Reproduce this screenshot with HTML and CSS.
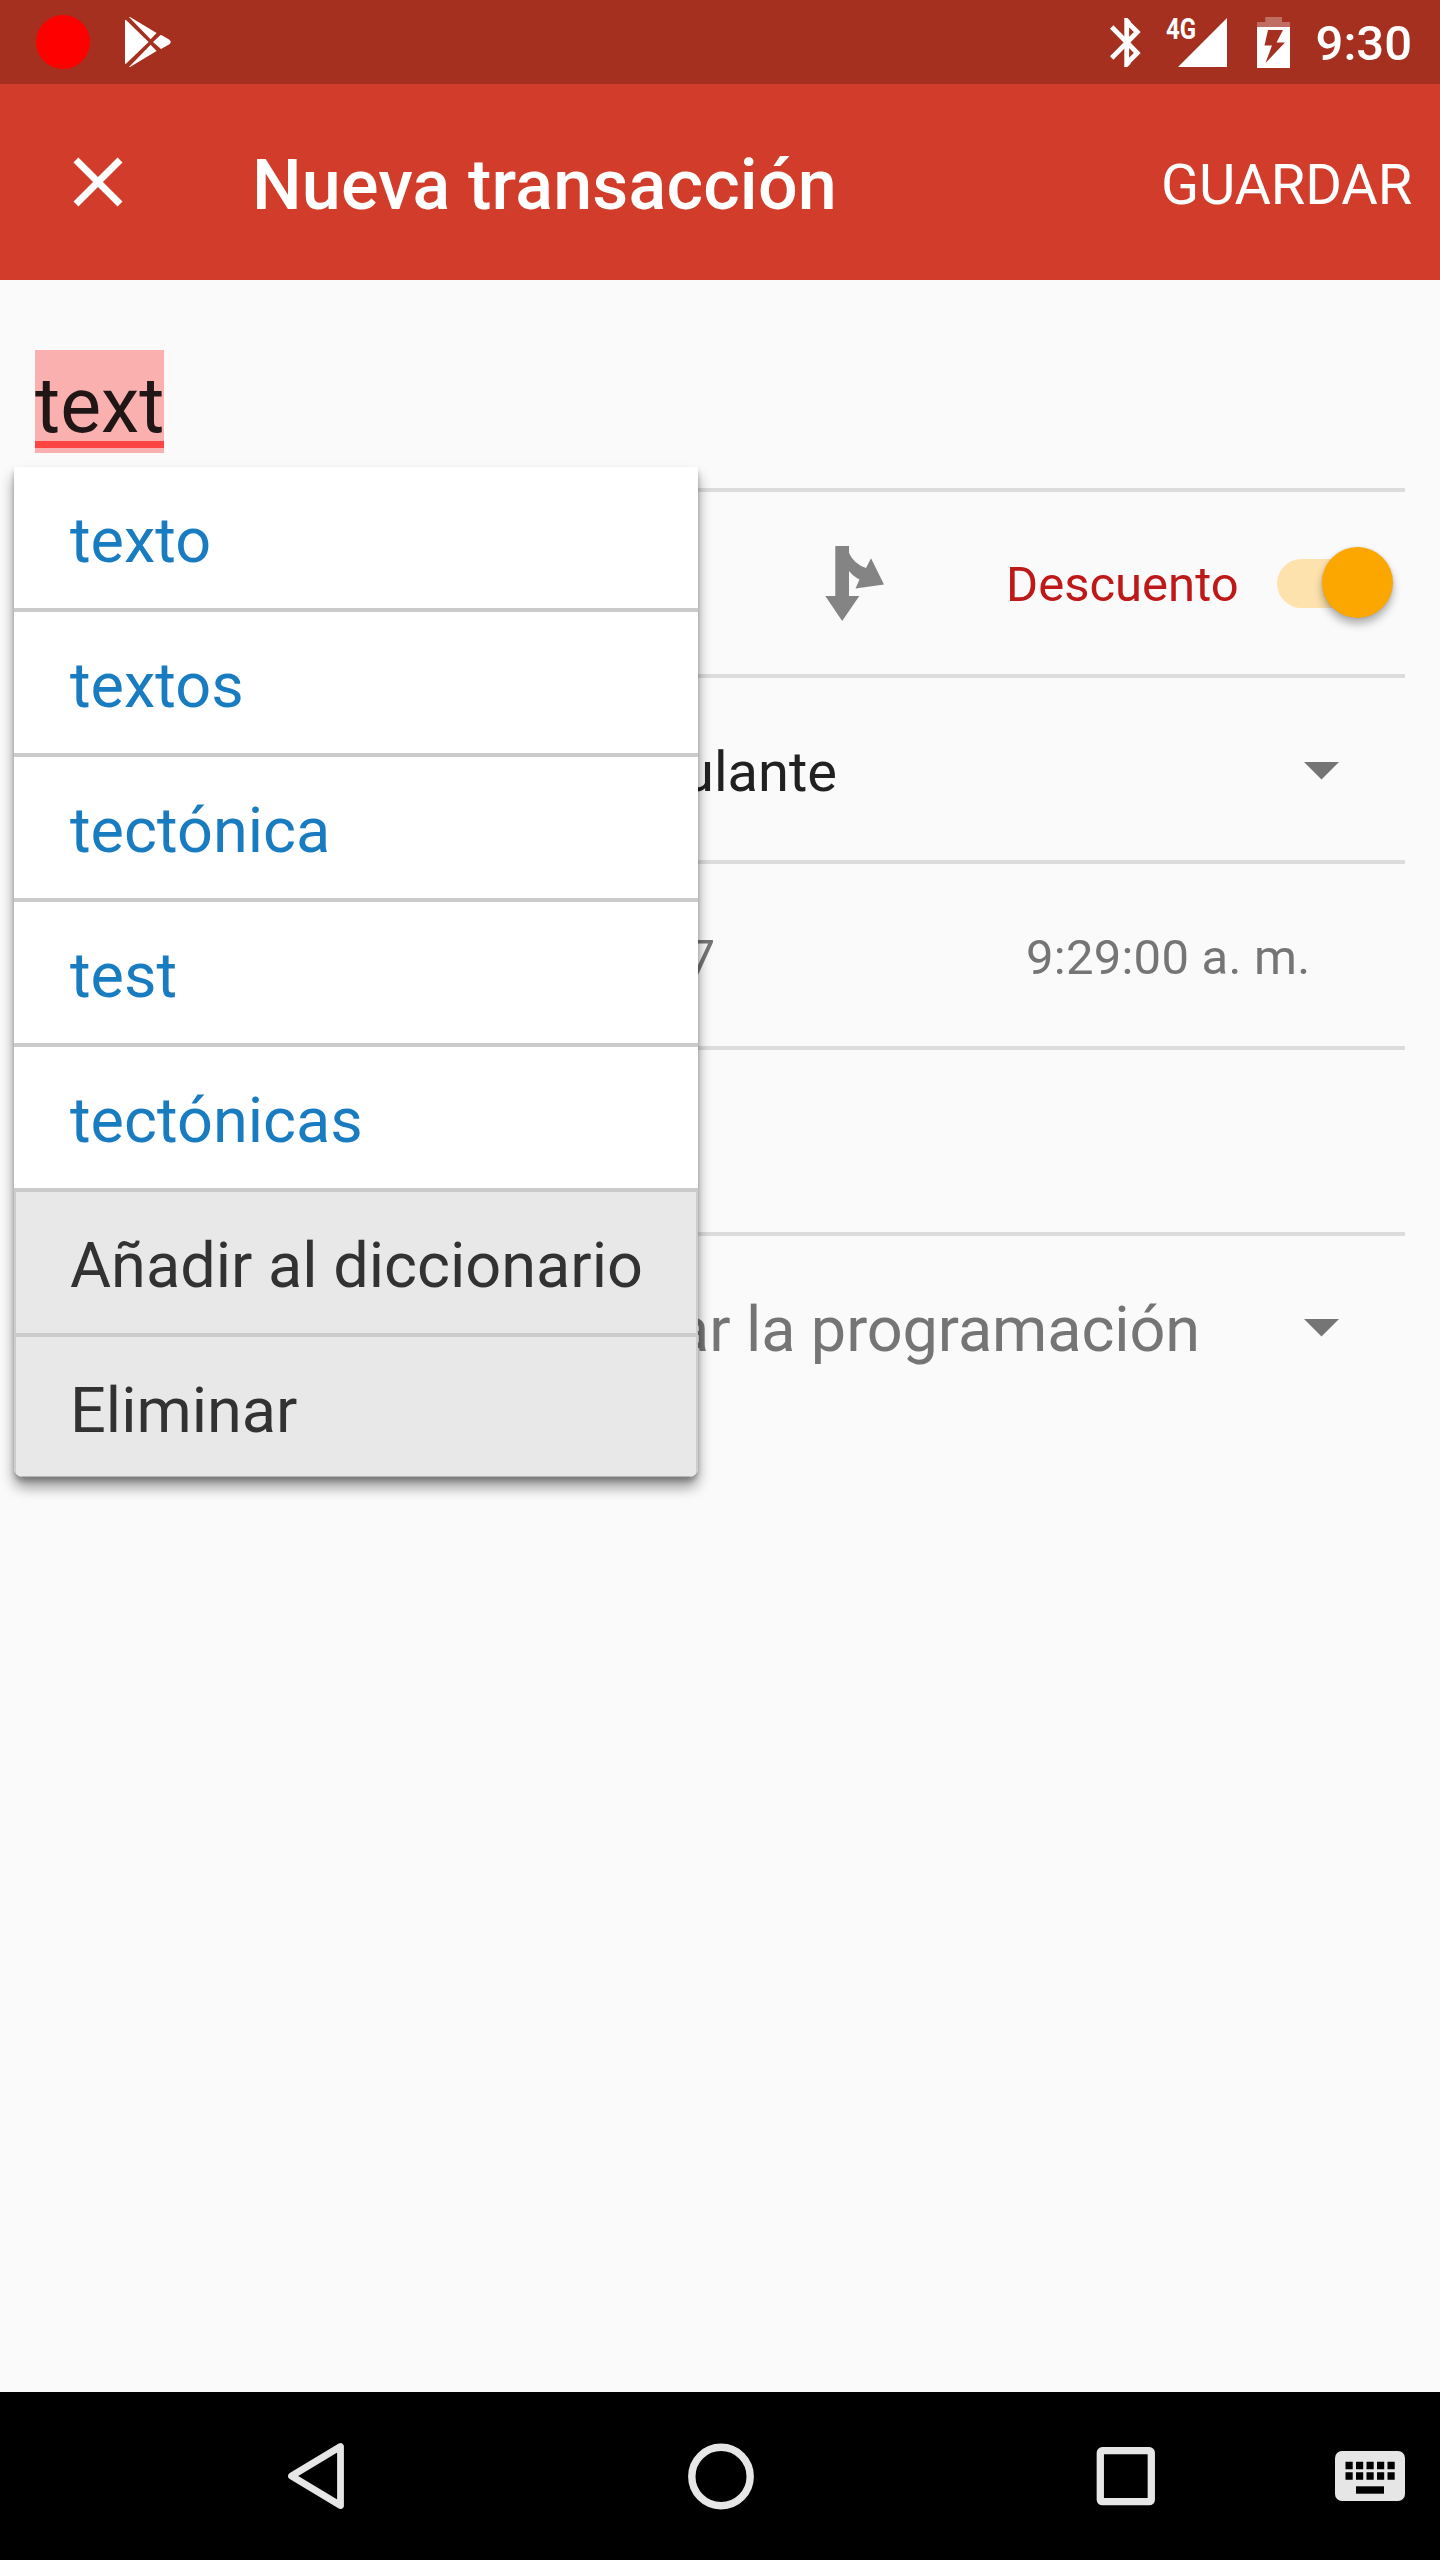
FILE: index.html
```html
<!DOCTYPE html>
<html lang="es">
<head>
<meta charset="utf-8">
<title>Nueva transacción</title>
<link rel="stylesheet" href="styles.css">
</head>
<body>
<div class="screen">
  <header class="status-bar">
    <span class="record-dot"></span>
    <svg class="play-icon" width="46" height="50" viewBox="0 0 46 50" fill="#fff">
      <path d="M0 3 1 3 23.600 25 1 46.700 0 46.700Z"/>
      <path d="M4 0 5 0 31.600 16 25.600 22.200Z"/>
      <path d="M4 50 5 50 31.600 34 25.600 27.800Z"/>
      <path d="M28 25 35.500 18Q36.500 18 38 19L44 22.500Q47.600 25 44 27.500L36 32Z"/>
    </svg>
    <svg class="bluetooth-icon" width="31" height="49" viewBox="0 0 31 49" fill="none" stroke="#fff" stroke-width="4.800">
      <path d="M1.700 9 17 24.500 1.700 40"/>
      <path d="M17 24.500 27.300 14 16.700 3.500V45.500L27.300 35 17 24.500"/>
      <path d="M14.200 0h3.200l3 3v6M14.200 49h3.200l3-3v-6" fill="#fff" stroke="none"/>
    </svg>
    <span class="network">4G</span>
    <svg class="signal-icon" width="49" height="49" viewBox="0 0 49 49" fill="#fff"><path d="M49 0V49H0Z"/></svg>
    <svg class="battery-icon" width="33" height="51" viewBox="0 0 33 51">
      <path d="M8.200 0H25V5H33V10H0V5H8.200Z" fill="#fff" fill-opacity=".3"/>
      <path fill="#fff" fill-rule="evenodd" d="M0 10H33V51H0ZM11 13 7.500 28.500H15L8.500 46 28 25.500H19.500L26 13Z"/>
    </svg>
    <span class="clock">9:30</span>
  </header>

  <div class="app-bar">
    <svg class="close-icon" width="84" height="84" viewBox="0 0 24 24" fill="#fff"><path d="M19 6.410 17.590 5 12 10.590 6.410 5 5 6.410 10.590 12 5 17.590 6.410 19 12 13.410 17.590 19 19 17.590 13.410 12z"/></svg>
    <h1 class="title">Nueva transacción</h1>
    <span class="save">GUARDAR</span>
  </div>

  <main class="form">
    <div class="row name-row"><span class="selected">text</span></div>
    <div class="row amount-row">
      <svg class="split-icon" width="60" height="75" viewBox="0 0 60 75" fill="#848484">
        <path d="M10.300 0H24V7Q29 18 41 22L46 12.300 59 38.500 30.500 42.500 34.500 33.500Q29 31 24 25V50H34.300L17.200 75 .3 50H10.300Z"/>
      </svg>
      <span class="type">Descuento</span>
      <span class="switch"><span class="thumb"></span></span>
    </div>
    <div class="row payee-row">
      <span class="payee">ulante</span>
      <svg class="caret" width="35" height="18" viewBox="0 0 35 18" fill="#757575"><path d="M0 0H35L17.500 17.500Z"/></svg>
    </div>
    <div class="row date-row">
      <span class="date">7</span>
      <span class="time">9:29:00 a. m.</span>
    </div>
    <div class="row"></div>
    <div class="row schedule-row">
      <span class="schedule">ar la programación</span>
      <svg class="caret" width="35" height="18" viewBox="0 0 35 18" fill="#757575"><path d="M0 0H35L17.500 17.500Z"/></svg>
    </div>
  </main>

  <ul class="suggestions">
    <li>texto</li>
    <li>textos</li>
    <li>tectónica</li>
    <li>test</li>
    <li>tectónicas</li>
    <li class="action">Añadir al diccionario</li>
    <li class="action">Eliminar</li>
  </ul>

  <nav class="nav-bar">
    <svg class="back" width="58" height="68" viewBox="0 0 58 68" fill="none" stroke="#e6e6e6" stroke-width="6.800" stroke-linejoin="round"><path d="M53.500 4.500V63.500L4.500 34Z"/></svg>
    <svg class="home" width="68" height="68" viewBox="0 0 68 68" fill="none" stroke="#e6e6e6" stroke-width="7.400"><circle cx="34" cy="34.500" r="29.200"/></svg>
    <svg class="recent" width="60" height="60" viewBox="0 0 60 60" fill="none" stroke="#e6e6e6" stroke-width="7.300"><rect x="4.300" y="4.700" width="51" height="51" rx="2"/></svg>
    <svg class="keyboard" width="70" height="50" viewBox="0 0 70 50">
      <rect width="70" height="50" rx="7" fill="#e6e6e6"/>
      <path d="M10.500 14.500H60M10.500 25H60" stroke="#000" stroke-width="7.400" stroke-dasharray="7.200 3.300"/>
      <path d="M21 39H49" stroke="#000" stroke-width="7.400"/>
    </svg>
  </nav>
</div>
</body>
</html>
```
FILE: styles.css
```css
* { box-sizing: border-box; }

body {
  margin: 0;
  font-family: Roboto, "Noto Sans", sans-serif;
  background: #fafafa;
}

svg { display: block; flex: none; }

.screen {
  position: relative;
  display: flex;
  flex-direction: column;
  width: 1440px;
  height: 2560px;
  background: #fafafa;
  overflow: hidden;
  white-space: nowrap;
}

.status-bar {
  display: flex;
  align-items: center;
  height: 84px;
  padding: 0 28px 0 36px;
  background: #a53020;
  color: #fff;
}

.record-dot {
  width: 54px;
  height: 54px;
  border-radius: 50%;
  background: #f00;
}

.play-icon { margin-left: 35px; }
.bluetooth-icon { margin-left: auto; margin-top: 1px; }

.network {
  width: 38px;
  margin: 0 -1px 26px 25px;
  font-size: 30px;
  font-weight: 700;
  line-height: 34px;
  transform: scaleX(.8);
  transform-origin: left;
}

.signal-icon { margin-left: -25px; }
.battery-icon { margin-left: 30px; }

.clock {
  margin: 3px 0 0 26px;
  font-size: 49px;
  font-weight: 500;
}

.app-bar {
  display: flex;
  align-items: center;
  height: 196px;
  padding: 0 28px 0 56px;
  background: #d13d2a;
  color: #fff;
}

.title {
  margin: 6px 0 0 112px;
  font-size: 70px;
  font-weight: 500;
  letter-spacing: .18px;
}

.save {
  margin: 6px 0 0 auto;
  font-size: 56px;
  letter-spacing: -.15px;
}

.form {
  flex: 1;
  padding: 0 35px;
  color: #212121;
}

.row {
  display: flex;
  align-items: center;
  height: 186px;
  border-bottom: 4px solid #dcdcdc;
}

.name-row {
  align-items: flex-start;
  height: 212px;
  padding-top: 70px;
}

.selected {
  height: 103px;
  padding-top: 11px;
  background: linear-gradient(#ff4444, #ff4444) 0 91px / 100% 7px no-repeat #fbb0b0;
  color: #211616;
  font-size: 77px;
  line-height: 90px;
}

.amount-row { padding-left: 790px; }
.split-icon { margin: 0; }

.type {
  width: 230px;
  margin: 3px 0 0 121px;
  color: #bf1818;
  font-size: 49px;
}

.switch {
  display: flex;
  align-items: center;
  justify-content: flex-end;
  width: 112px;
  height: 49px;
  margin: 0 0 0 41px;
  border-radius: 25px;
  background: linear-gradient(90deg, #fde2ae 80%, transparent 80%);
}

.thumb {
  width: 71px;
  height: 71px;
  margin: -1px -4px 0 0;
  border-radius: 50%;
  background: #fba700;
  box-shadow: 0 6px 8px rgba(0, 0, 0, .3), 0 0 3px rgba(0, 0, 0, .12);
}

.payee {
  width: 165px;
  margin: 5px 0 0 637px;
  font-size: 56px;
  text-align: right;
}

.caret { margin: 3px 66px 0 auto; }

.date-row {
  padding-top: 4px;
  color: #757575;
  font-size: 49px;
}

.date { width: 29px; margin-left: 651px; text-align: right; }
.time { margin-left: 311px; letter-spacing: .25px; }

.schedule-row { border-bottom: 0; height: 182px; }

.schedule {
  margin: 5px 0 0 auto;
  color: #757575;
  font-size: 63px;
  letter-spacing: -.1px;
}

.schedule-row .caret { margin: 1px 66px 0 104px; }

.suggestions {
  position: absolute;
  top: 467px;
  left: 14px;
  width: 684px;
  margin: 0;
  padding: 0;
  list-style: none;
  border-radius: 0 0 9px 9px;
  background: #fff;
  box-shadow: 0 10px 14px rgba(0, 0, 0, .4), 0 4px 5px rgba(0, 0, 0, .22);
  overflow: hidden;
}

.suggestions li {
  height: 145px;
  padding: 3px 56px 0;
  border-bottom: 4px solid #cbcbcb;
  color: #197cc0;
  font-size: 63px;
  line-height: 141px;
}

.suggestions .action {
  background: #e8e8e8;
  box-shadow: inset 2px 0 #cdcdcd, inset -2px 0 #cdcdcd;
  color: #323232;
}

.suggestions .action:last-child {
  height: 140px;
  border-bottom: 1px solid #b5b5b5;
}

.nav-bar {
  display: flex;
  align-items: center;
  height: 168px;
  padding-left: 287px;
  background: #000;
}

.home { margin-left: 342px; }
.recent { margin-left: 341px; }
.keyboard { margin-left: 179px; }
```
